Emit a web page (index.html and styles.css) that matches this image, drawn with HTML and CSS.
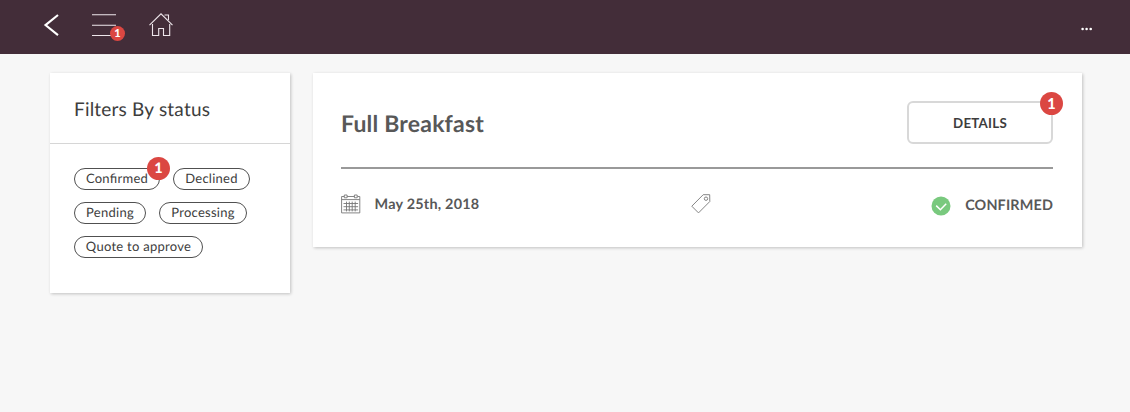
FILE: index.html
```html
<!DOCTYPE html>
<html lang="en">
<head>
<meta charset="utf-8">
<title>Orders</title>
<link rel="stylesheet" href="styles.css">
</head>
<body>
<header class="topbar">
  <svg class="back" width="18" height="26" viewBox="0 0 18 26"><path d="M16 3 3.5 13.1l12.5 10"/></svg>
  <div class="menu">
    <svg class="menu-icon" width="26" height="26" viewBox="0 0 26 26"><path d="M1 1.7h24M1 12.2h24M1 22.5h24"/></svg>
    <span class="badge badge-small">1</span>
  </div>
  <svg class="home" width="26" height="26" viewBox="0 0 26 26"><path d="M1.5 13.2 13 1.8l11.5 11.4M4.5 12v11.5h6.2v-7h4.8v7h6.2V12M16.5 3h4v5"/></svg>
  <svg class="more" width="12" height="4" viewBox="0 0 12 4"><circle cx="1.6" cy="2" r="1.3"/><circle cx="5.6" cy="2" r="1.3"/><circle cx="9.7" cy="2" r="1.3"/></svg>
</header>
<main class="page">
  <aside class="card filters">
    <h2 class="filters-title">Filters By status</h2>
    <div class="pills">
      <div class="pill confirmed">Confirmed<span class="badge pill-badge">1</span></div>
      <div class="pill declined">Declined</div>
      <div class="pill pending">Pending</div>
      <div class="pill processing">Processing</div>
      <div class="pill quote">Quote to approve</div>
    </div>
  </aside>
  <section class="card order">
    <div class="order-head">
      <h1 class="order-title">Full Breakfast</h1>
      <button class="details">DETAILS<span class="badge details-badge">1</span></button>
    </div>
    <div class="order-info">
      <div class="date">
        <svg width="20" height="20" viewBox="0 0 20 20"><path d="M3 2.5H.6v16.4h18.2V2.5h-2.3M6.1 2.5h7.3M.6 5.6h18.2M2.5 9.5h14.6M2.5 12.7h14.6M2.5 15.9h14.6M5.5 7.6v9.8M8.3 7.6v9.8M11.2 7.6v9.8M14.2 7.6v9.8M3.3 1h2.8v2.8H3.3zM13.4 1h2.8v2.8h-2.8z"/></svg>
        <span>May 25th, 2018</span>
      </div>
      <svg class="tag" width="20" height="20" viewBox="0 0 20 20"><path d="M12.2.7h6.5l.1 6.8L7.5 18.9.8 12.2z"/><circle cx="15" cy="4.7" r="1.7"/></svg>
      <div class="status">
        <svg width="20" height="20" viewBox="0 0 20 20"><circle cx="10" cy="10" r="9.5"/><path d="m5.2 9.6 4.2 4.2 5.8-6"/></svg>
        <span>CONFIRMED</span>
      </div>
    </div>
  </section>
</main>
</body>
</html>
```

FILE: styles.css
```css
* { box-sizing: border-box; }
body {
  margin: 0;
  min-height: 412px;
  background: #f7f7f7;
  color: #3d3d3d;
  font-family: Lato, sans-serif;
  text-rendering: geometricPrecision;
}
svg { display: block; fill: none; flex: none; }
.topbar {
  display: flex;
  align-items: flex-start;
  height: 54px;
  padding: 12px 37px 0 42px;
  background: #432d39;
}
.back { stroke: #fff; stroke-width: 2.1; }
.menu { position: relative; margin-left: 31px; }
.menu-icon { margin-top: 1px; stroke: #eee6eb; stroke-width: 1.1; }
.home { margin-left: 31px; stroke: #eee6eb; stroke-width: 1.1; }
.more { margin: 15px 0 0 auto; fill: #fff; }
.badge {
  position: absolute;
  width: 23px;
  height: 23px;
  border-radius: 50%;
  background: #db4742;
  color: #fff;
  font-size: 14.5px;
  font-weight: 900;
  line-height: 24px;
  letter-spacing: 0;
  text-align: center;
}
.badge-small { left: 19px; top: 14px; width: 15px; height: 15px; font-size: 11px; line-height: 15px; }
.page {
  display: flex;
  align-items: flex-start;
  gap: 23px;
  padding: 19px 48px 0 50px;
}
.card { background: #fff; box-shadow: 1px 1px 3px rgba(0, 0, 0, .22); }
.filters { width: 240px; height: 220px; }
.filters-title {
  height: 71px;
  margin: 0;
  padding-left: 24px;
  border-bottom: 1px solid #d6d6d6;
  font-size: 19px;
  font-weight: 400;
  line-height: 74px;
  letter-spacing: .2px;
}
.pills { display: flex; flex-wrap: wrap; gap: 12px 13px; padding: 24px 24px 0; }
.pill {
  position: relative;
  height: 22px;
  border: 1px solid #505050;
  border-radius: 11px;
  font-size: 13px;
  line-height: 19px;
  letter-spacing: .27px;
  text-align: center;
  white-space: nowrap;
  font-feature-settings: "liga";
}
.confirmed { width: 86px; }
.declined { width: 77px; }
.pending { width: 72px; }
.processing { width: 88px; }
.quote { width: 129px; }
.pill-badge { right: -11px; top: -12px; }
.order { width: 769px; height: 174px; padding: 28px 29px 0 28px; color: #585858; }
.order-head {
  display: flex;
  justify-content: space-between;
  align-items: flex-start;
  height: 68px;
  border-bottom: 2px solid #999;
}
.order-title { margin: 0; font-size: 23px; font-weight: 700; line-height: 45px; letter-spacing: .2px; }
.details {
  position: relative;
  width: 146px;
  height: 43px;
  padding: 0;
  border: 2px solid #d8d8d8;
  border-radius: 6px;
  background: #fff;
  color: #3d3d3d;
  font: 700 13.3px/40px Lato, sans-serif;
  letter-spacing: .25px;
}
.details-badge { right: -12px; top: -11px; }
.order-info {
  display: flex;
  justify-content: space-between;
  align-items: flex-start;
  padding-top: 25px;
  font-size: 14.4px;
  font-weight: 700;
  line-height: 22px;
  letter-spacing: .23px;
}
.date { display: flex; gap: 13.5px; width: 350px; }
.date svg { stroke: #777; stroke-width: .9; }
.tag { stroke: #858585; stroke-width: 1; }
.status { display: flex; justify-content: flex-end; gap: 14px; width: 342px; line-height: 24px; letter-spacing: .15px; }
.status svg { margin-top: 2px; }
.status circle { fill: #79c97e; }
.status path { stroke: #fff; stroke-width: 1.5; }
```
